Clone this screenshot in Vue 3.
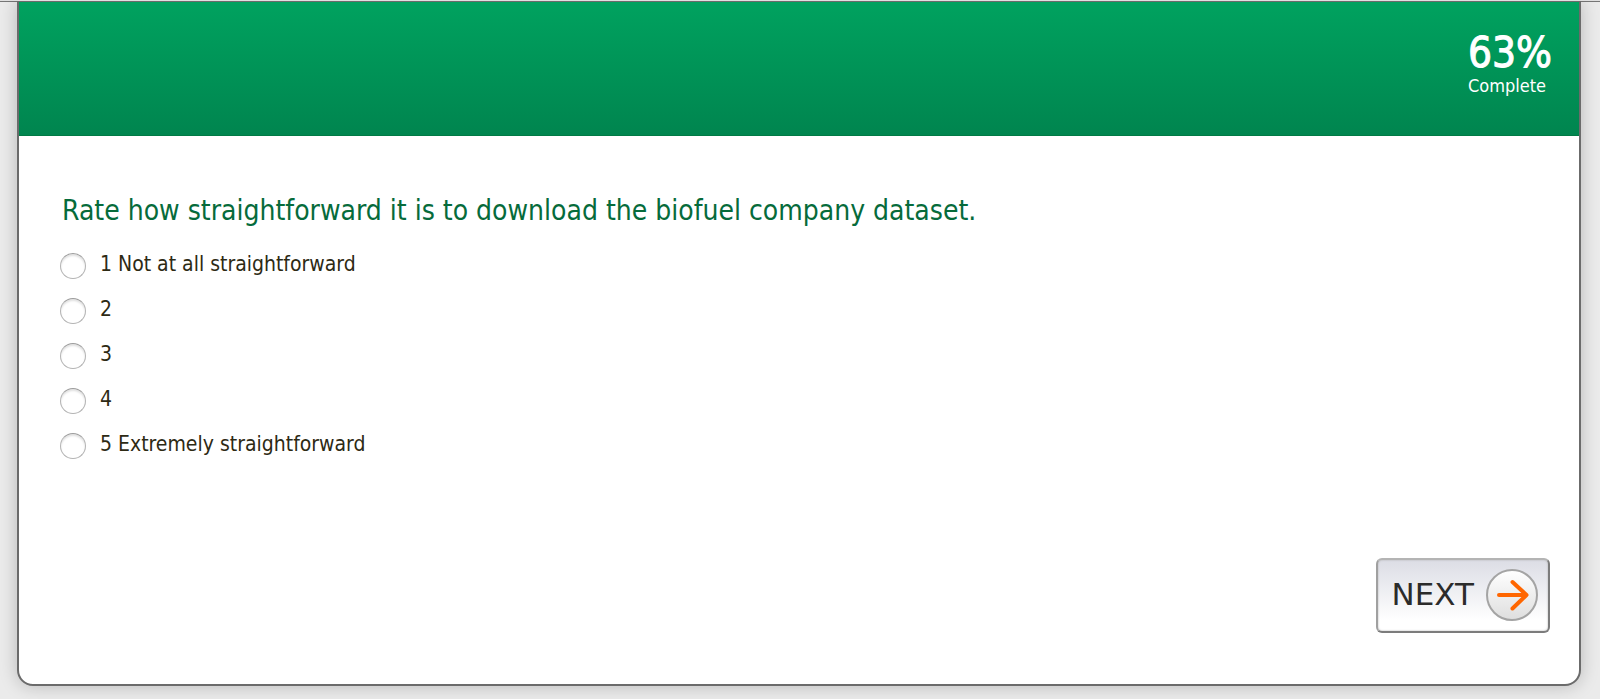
<script setup>
import { ref } from 'vue'

const progress = 63
const question = 'Rate how straightforward it is to download the biofuel company dataset.'
const options = [
  { value: 1, label: '1 Not at all straightforward' },
  { value: 2, label: '2' },
  { value: 3, label: '3' },
  { value: 4, label: '4' },
  { value: 5, label: '5 Extremely straightforward' },
]
const answer = ref(null)
</script>

<template>
  <div class="page">
    <main class="panel">
      <header class="banner">
        <div class="progress">
          <div class="percent">{{ progress }}%</div>
          <div class="complete">Complete</div>
        </div>
      </header>
      <form class="survey" @submit.prevent>
        <fieldset class="question">
          <legend class="title">{{ question }}</legend>
          <label v-for="option in options" :key="option.value" class="option">
            <input v-model="answer" class="radio" type="radio" name="rating" :value="option.value" />
            <span class="option-text">{{ option.label }}</span>
          </label>
        </fieldset>
        <div class="actions">
          <button class="next" type="submit">
            <span class="next-text">NEXT</span>
            <svg class="arrow" viewBox="0 0 52 52" aria-hidden="true">
              <defs>
                <linearGradient id="disc" x1="0" y1="0" x2="0" y2="1">
                  <stop offset="0" stop-color="#ffffff" />
                  <stop offset="1" stop-color="#dedede" />
                </linearGradient>
              </defs>
              <circle cx="26" cy="26" r="25" fill="url(#disc)" stroke="#a4a4a4" stroke-width="2" />
              <path d="M13 26H39M26.500 13L40.500 26L26.500 39.500" fill="none" stroke="#ff6600" stroke-width="4" stroke-linecap="round" stroke-linejoin="round" />
            </svg>
          </button>
        </div>
      </form>
    </main>
  </div>
</template>

<style>
body {
  margin: 0;
  background: #ebebeb;
}
</style>

<style scoped>
.page {
  box-sizing: border-box;
  min-height: 100vh;
  padding: 0 19px 12px 17px;
  border-top: 1px solid #e0e0e0;
  overflow: hidden;
  background: linear-gradient(#777, #777) top / 100% 1px no-repeat, #ebebeb;
  font-family: "DejaVu Sans Condensed", "Noto Sans", sans-serif;
}

.panel {
  border: 2px solid #6b6b6b;
  border-top-width: 1px;
  border-radius: 0 0 16px 16px;
  background: #fff;
  box-shadow: 0 0 18px rgba(0, 0, 0, 0.22);
}

.banner {
  box-sizing: border-box;
  display: flex;
  justify-content: flex-end;
  height: 134px;
  padding: 29px 27px 0 0;
  border-bottom: 1px solid #007a45;
  background: linear-gradient(#00a25f, #00854f);
  color: #fff;
}

.percent {
  font-size: 42px;
  line-height: 44px;
  -webkit-text-stroke: 1px #fff;
}

.complete {
  font-size: 18px;
  line-height: 22px;
}

.survey {
  padding: 57px 29px 51px 41px;
}

.question {
  min-width: 0;
  margin: 0;
  padding: 0;
  border: 0;
}

.title {
  margin-bottom: 14px;
  padding: 0 2px;
  color: #066b3b;
  font-size: 28px;
  line-height: 36px;
}

.option {
  display: flex;
  gap: 14px;
  width: fit-content;
  height: 45px;
  align-items: center;
}

.radio {
  appearance: none;
  box-sizing: border-box;
  flex: none;
  width: 26px;
  height: 26px;
  margin: 0;
  border: 1px solid #b4b4b4;
  border-top-color: #9c9c9c;
  border-radius: 50%;
  background: #fff;
  box-shadow: inset 0 2px 2px #e2e2e2;
}

.radio:checked {
  background: radial-gradient(circle, #333 0 5px, #fff 6px);
}

.option-text {
  padding-bottom: 4px;
  color: #2d2a14;
  font-size: 21px;
  line-height: 26px;
}

.actions {
  display: flex;
  justify-content: flex-end;
  margin-top: 90px;
}

.next {
  box-sizing: border-box;
  display: flex;
  align-items: center;
  gap: 12px;
  height: 75px;
  padding: 0 10px 2px 14px;
  border: 2px solid;
  border-color: #b4b4b4 #7c7c7c #7c7c7c #a0a0a0;
  border-radius: 6px;
  background: linear-gradient(#dcdde5, #fff 85%);
  box-shadow: inset 0 0 2px #aaa;
  color: #2b2b2b;
  font-family: "DejaVu Sans", sans-serif;
  font-size: 31px;
}

.next-text {
  padding-bottom: 2px;
}

.arrow {
  width: 52px;
  height: 52px;
}
</style>
